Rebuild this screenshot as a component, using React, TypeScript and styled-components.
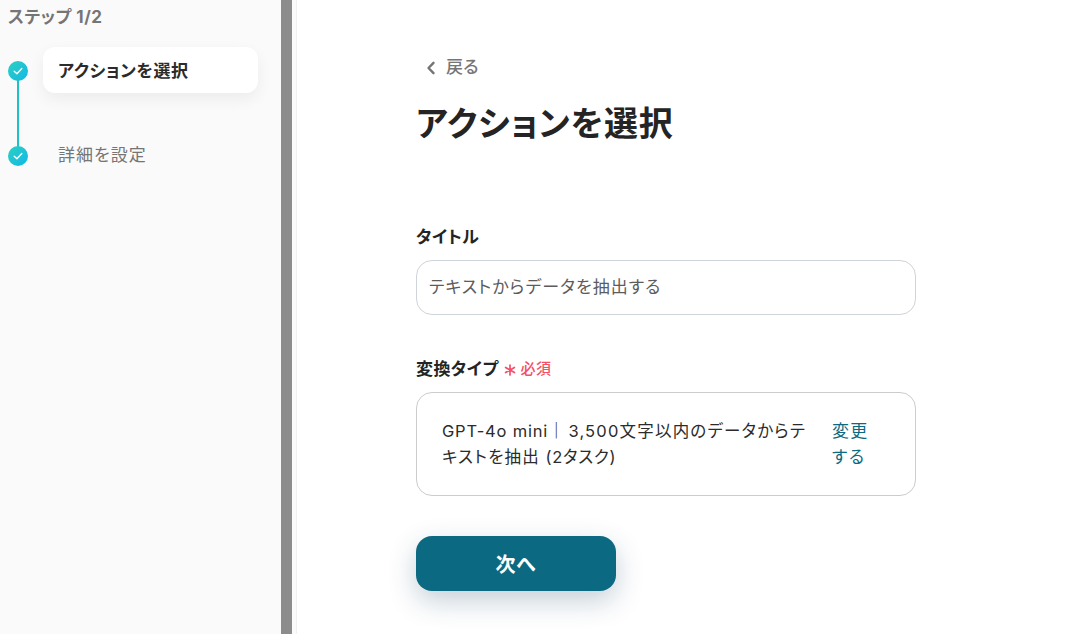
import React from 'react'
import styled, { createGlobalStyle } from 'styled-components'

const GlobalStyle = createGlobalStyle`
  html, body {
    margin: 0;
    padding: 0;
    height: 100%;
    background: #ffffff;
    font-family: Inter, 'Noto Sans CJK JP', sans-serif;
    font-feature-settings: 'palt';
    letter-spacing: 0.4px;
    overflow: hidden;
  }
  #root {
    height: 100%;
  }
`

const Page = styled.div`
  display: flex;
  width: 1078px;
  height: 634px;
  overflow: hidden;
`

const Sidebar = styled.aside`
  width: 281px;
  flex-shrink: 0;
  background: #fafafa;
  padding: 7px 8px 0;
  box-sizing: border-box;
`

const StepCount = styled.div`
  font-size: 17px;
  line-height: 20px;
  font-weight: 700;
  letter-spacing: 0.5px;
  color: #757575;
`

const StepList = styled.div`
  display: flex;
  flex-direction: column;
  margin-top: 20px;
`

const StepRow = styled.div<{ $last?: boolean }>`
  display: flex;
  align-items: center;
  gap: 15px;
  height: 46px;
  margin-bottom: ${(p) => (p.$last ? 0 : '39px')};
  position: relative;
`

const Connector = styled.div`
  position: absolute;
  left: 9px;
  top: 30px;
  width: 2px;
  height: 70px;
  background: #1fc0c8;
`

const Dot = styled.div`
  width: 20px;
  height: 20px;
  flex-shrink: 0;
  border-radius: 50%;
  background: linear-gradient(135deg, #2bd0c0 0%, #12b8e8 100%);
  display: flex;
  align-items: center;
  justify-content: center;
  margin-top: 1px;
`

const StepLabel = styled.div<{ $active?: boolean }>`
  width: 215px;
  height: 46px;
  box-sizing: border-box;
  padding: ${(p) => (p.$active ? '0 15px 2px' : '0 15px 4px')};
  display: flex;
  align-items: center;
  border-radius: 12px;
  font-size: 17px;
  letter-spacing: ${(p) => (p.$active ? '0.65px' : '1px')};
  font-weight: ${(p) => (p.$active ? 700 : 400)};
  color: ${(p) => (p.$active ? '#2b2b2b' : '#757575')};
  background: ${(p) => (p.$active ? '#ffffff' : 'transparent')};
  box-shadow: ${(p) => (p.$active ? '0 6px 16px rgba(0, 0, 0, 0.06)' : 'none')};
`

const Divider = styled.div`
  width: 11px;
  flex-shrink: 0;
  background: #8c8c8c;
`

const Gutter = styled.div`
  width: 4px;
  flex-shrink: 0;
  background: #fafafa;
  border-right: 1px solid #f0f0f0;
`

const Main = styled.main`
  flex: 1;
  padding: 55px 0 0 119px;
`

const Form = styled.div`
  width: 500px;
  display: flex;
  flex-direction: column;
`

const BackLink = styled.div`
  display: flex;
  align-items: center;
  gap: 7px;
  height: 24px;
  padding-left: 7px;
  font-size: 17px;
  font-weight: 500;
  line-height: 22px;
  color: #757575;

  svg {
    margin-top: 1px;
  }
`

const Title = styled.h1`
  margin: 21px 0 0;
  font-size: 34px;
  line-height: 48px;
  font-weight: 700;
  letter-spacing: 0.8px;
  color: #242424;
`

const Field = styled.div<{ $gap: number }>`
  margin-top: ${(p) => p.$gap}px;
`

const LabelRow = styled.div`
  display: flex;
  align-items: center;
  height: 24px;
  margin-bottom: 13px;
`

const Label = styled.label`
  font-size: 17px;
  font-weight: 700;
  color: #242424;
`

const Asterisk = styled.span`
  margin-left: 5px;
  display: inline-flex;
  margin-top: 5px;
`

const Required = styled.span`
  margin-left: 5px;
  font-size: 15px;
  font-weight: 500;
  color: #f4506a;
`

const TextInput = styled.div`
  height: 55px;
  box-sizing: border-box;
  border: 1px solid #cfd3da;
  border-radius: 16px;
  padding: 0 12px 5px;
  display: flex;
  align-items: center;
  font-size: 17px;
  letter-spacing: 1px;
  color: #5c5c5c;
`

const SelectBox = styled.div`
  height: 104px;
  box-sizing: border-box;
  border: 1px solid #cccccc;
  border-radius: 16px;
  padding: 0 25px 1px;
  display: flex;
  align-items: center;
  justify-content: space-between;
  font-size: 16.5px;
  line-height: 26px;
  letter-spacing: 0.8px;
  color: #2b2b2b;
`

const SelectText = styled.div`
  width: 370px;
`

const Separator = styled.span`
  margin-right: 3px;
`

const SpecText = styled.span`
  letter-spacing: 1.2px;
`

const ChangeLink = styled.div`
  width: 40px;
  margin-right: 18px;
  font-size: 17px;
  letter-spacing: 1.3px;
  color: #0b6a82;
`

const NextButton = styled.button`
  margin-top: 40px;
  width: 200px;
  height: 55px;
  border: none;
  border-radius: 16px;
  background: #0b6a82;
  color: #ffffff;
  font-family: inherit;
  font-size: 20px;
  font-weight: 700;
  letter-spacing: inherit;
  box-shadow: 0 10px 28px rgba(11, 60, 90, 0.24);
`

const Check = () => (
  <svg width="12" height="12" viewBox="0 0 12 12" fill="none">
    <path d="M2.2 6.2 4.9 8.8 9.8 3.6" stroke="#fff" strokeWidth="1.4" strokeLinecap="round" strokeLinejoin="round" />
  </svg>
)

const App = () => {
  return (
    <Page>
      <GlobalStyle />
      <Sidebar>
        <StepCount>ステップ 1/2</StepCount>
        <StepList>
          <StepRow>
            <Connector />
            <Dot>
              <Check />
            </Dot>
            <StepLabel $active>アクションを選択</StepLabel>
          </StepRow>
          <StepRow $last>
            <Dot>
              <Check />
            </Dot>
            <StepLabel>詳細を設定</StepLabel>
          </StepRow>
        </StepList>
      </Sidebar>
      <Divider />
      <Gutter />
      <Main>
        <Form>
          <BackLink>
            <svg width="16" height="16" viewBox="0 0 16 16" fill="none">
              <path d="M10.5 2.8 5.5 8l5 5.2" stroke="#757575" strokeWidth="2.4" strokeLinecap="round" strokeLinejoin="round" />
            </svg>
            戻る
          </BackLink>
          <Title>アクションを選択</Title>
          <Field $gap={75}>
            <LabelRow>
              <Label>タイトル</Label>
            </LabelRow>
            <TextInput>テキストからデータを抽出する</TextInput>
          </Field>
          <Field $gap={40}>
            <LabelRow>
              <Label>変換タイプ</Label>
              <Asterisk>
                <svg width="12" height="12" viewBox="0 0 12 12" fill="none">
                  <path d="M6 1v10M1.6 3.4l8.8 5.2M10.4 3.4 1.6 8.6" stroke="#f4506a" strokeWidth="1.7" strokeLinecap="round" />
                </svg>
              </Asterisk>
              <Required>必須</Required>
            </LabelRow>
            <SelectBox>
              <SelectText>
                GPT-4o mini<Separator>｜</Separator>
                <SpecText>3,500文字以内のデータからテキストを抽出</SpecText> (2タスク)
              </SelectText>
              <ChangeLink>変更する</ChangeLink>
            </SelectBox>
          </Field>
          <NextButton>次へ</NextButton>
        </Form>
      </Main>
    </Page>
  )
}

export default App
